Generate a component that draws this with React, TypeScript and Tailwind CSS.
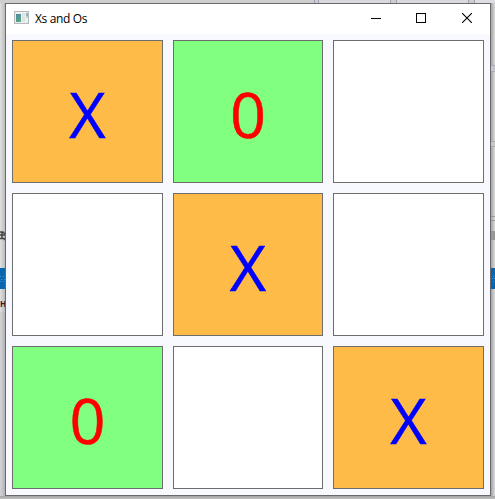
type Mark = 'X' | '0' | '';

const board: Mark[] = ['X', '0', '', '', 'X', '', '0', '', 'X'];

const cellColors: Record<Mark, string> = {
  X: 'bg-[#ffbb48] text-[#0000ff]',
  '0': 'bg-[#80ff80] text-[#ff0000]',
  '': 'bg-white',
};

function Cell({ mark }: { mark: Mark }) {
  return (
    <button
      className={`flex items-start justify-center border border-[#6d6d6d] pt-[30px] text-[63px] leading-[86px] [-webkit-text-stroke:0.5px] ${cellColors[mark]}`}
    >
      {mark}
    </button>
  );
}

function AppIcon() {
  return (
    <svg className="mb-[3px]" width="15" height="13" viewBox="0 0 15 13" shapeRendering="crispEdges">
      <defs>
        <linearGradient id="pane" x1="0" y1="0" x2="0.6" y2="1">
          <stop offset="0" stopColor="#5388a4" />
          <stop offset="1" stopColor="#56a982" />
        </linearGradient>
      </defs>
      <rect width="15" height="13" fill="#b4b8bc" />
      <rect x="1" y="1" width="13" height="11" fill="#eef0f1" />
      <rect x="2" y="3" width="5" height="8" fill="url(#pane)" />
      <rect x="8" y="2" width="3" height="9" fill="#e0e2e3" />
      <rect x="12" y="2" width="2" height="3" fill="#8cb4c0" />
      <rect x="12" y="5" width="2" height="2" fill="#b8d5c8" />
    </svg>
  );
}

function TitleBar() {
  return (
    <header className="flex h-[30px] shrink-0 items-center bg-white pl-2">
      <AppIcon />
      <h1 className="ml-1.5 flex-1 text-[12px] leading-4 tracking-[-0.35px] text-black">Xs and Os</h1>
      <div className="flex h-full">
        <button aria-label="Minimize" className="flex w-[45px] items-center justify-center pb-1">
          <svg width="10" height="10" shapeRendering="crispEdges">
            <path d="M0 6.5H10" stroke="black" />
          </svg>
        </button>
        <button aria-label="Maximize" className="flex w-[46px] items-center justify-center pb-[2px]">
          <svg width="10" height="10" shapeRendering="crispEdges">
            <rect x="0.5" y="0.5" width="9" height="9" fill="none" stroke="black" />
          </svg>
        </button>
        <button aria-label="Close" className="flex w-[46px] items-center justify-center pb-[2px]">
          <svg width="10" height="10">
            <path d="M0 0L10 10M10 0L0 10" stroke="black" strokeWidth="1.1" />
          </svg>
        </button>
      </div>
    </header>
  );
}

function LeftBackdrop() {
  return (
    <div className="flex w-[5px] shrink-0 flex-col overflow-hidden bg-gradient-to-r from-[#e0e0e0] to-[#bcbcbc]">
      <div className="mt-[225px] h-4 shrink-0 overflow-hidden">
        <svg width="5" height="16">
          <path d="M0 4H3L5 6M0 7H5M0 10.5H4L5 12M2 4V11" fill="none" stroke="#444" strokeWidth="1.5" />
        </svg>
      </div>
      <div className="mt-6 h-[21px] shrink-0 bg-[#0865b0]">
        <svg width="5" height="21" fill="#4391cb">
          <path d="M0 8h1v1H0zM3 8h1v1H3zM1 11h1v1H1zM4 11h1v1H4zM0 13h1v1H0zM3 13h1v1H3z" />
        </svg>
      </div>
      <div className="mt-[7px] h-4 text-[8px] font-bold leading-4 text-[#351929]">H</div>
      <div className="flex-1 bg-gradient-to-r from-[#d4d4d8] to-[#b4b4b6]" />
    </div>
  );
}

function RightBackdrop() {
  return (
    <div className="flex w-1 shrink-0 flex-col bg-gradient-to-r from-[#a5a5a5] to-[#dadada]">
      <div className="mt-[62px] h-[7px] border-y border-[#aaaab0] bg-[#c5c5cc]" />
      <div className="mt-[69px] h-1.5 border-y border-[#aaaab0] bg-[#c5c5cc]" />
      <div className="mt-[69px] h-[5px] border-y border-[#98989c]" />
      <div className="mt-2.5 h-[9px] bg-[#98989b]" />
      <div className="mt-7 h-[21px] bg-[#0865b0]">
        <svg width="4" height="21" fill="#4391cb">
          <path d="M2 8h1v1H2zM1 10h1v1H1zM3 10h1v1H3zM2 13h1v1H2z" />
        </svg>
      </div>
    </div>
  );
}

export default function App() {
  return (
    <div className="flex h-[499px] w-[495px] flex-col overflow-hidden bg-[#bababd] font-['Open_Sans','Noto_Sans',sans-serif]">
      <div className="flex h-[3px] shrink-0 bg-[#cecece]">
        <div className="ml-[314px] w-[5px] border-x border-[#a0a0ac]" />
        <div className="w-[71px] bg-[#d9d9de]" />
        <div className="w-[7px] border-x border-[#a0a0ac]" />
        <div className="w-[71px] bg-[#d9d9de]" />
        <div className="w-[7px] border-x border-[#a0a0ac]" />
        <div className="flex-1 bg-[#dedee2]" />
      </div>
      <div className="flex h-[493px] shrink-0">
        <LeftBackdrop />
        <main className="flex w-[486px] shrink-0 flex-col border border-[#69696d] bg-[#f8f8ff]">
          <TitleBar />
          <div className="mt-1.5 ml-1.5 grid grid-cols-[151px_150px_151px] grid-rows-[143px_143px_143px] gap-[10px]">
            {board.map((mark, index) => (
              <Cell key={index} mark={mark} />
            ))}
          </div>
        </main>
        <RightBackdrop />
      </div>
      <div className="h-[3px] shrink-0 bg-gradient-to-b from-[#a5a5a5] to-[#bfbfbf]" />
    </div>
  );
}
